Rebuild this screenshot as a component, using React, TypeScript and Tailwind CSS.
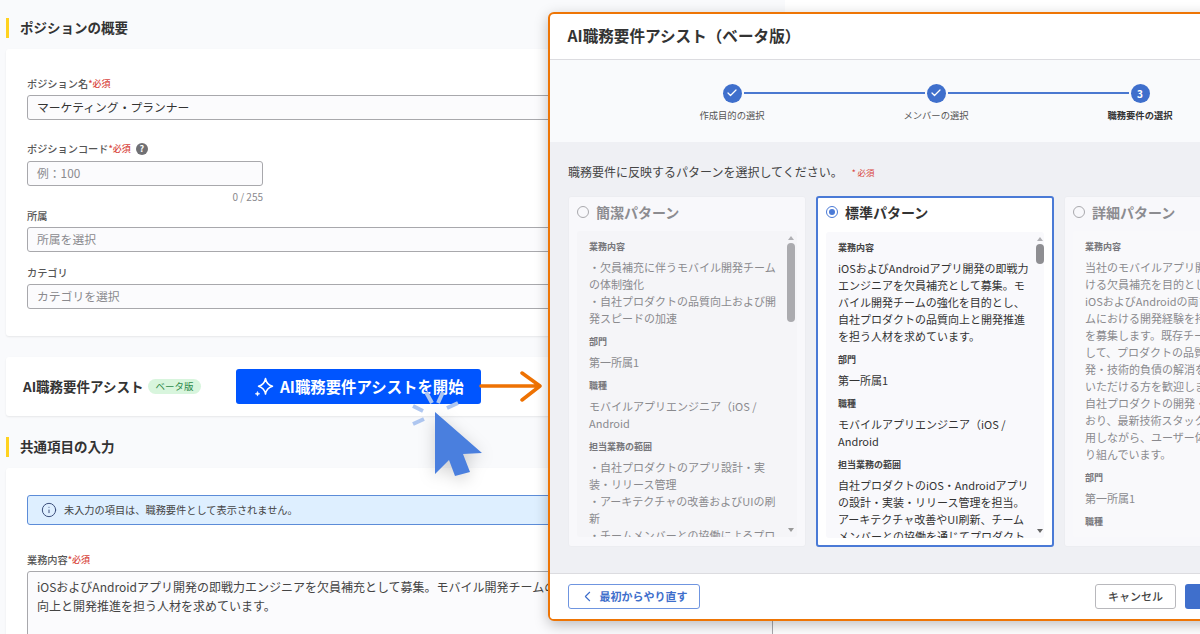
import React, { FC } from 'react';
import { Check, ChevronLeft, Info } from 'lucide-react';

const Heading: FC<{ title: string }> = ({ title }) => (
    <div className="flex h-[20px] items-center">
        <div className="h-[20px] w-[3px] bg-[#ffd21f]" />
        <h2 className="ml-[11px] -translate-y-px text-[13.5px] leading-[20px] font-bold text-[#333]">{title}</h2>
    </div>
);

const Required = () => <span className="text-[9px] text-[#d8453c]">*必須</span>;

const FieldLabel: FC<{ label: string; required?: boolean; children?: React.ReactNode }> = ({ label, required, children }) => (
    <div className="flex h-[14px] items-center text-[10.2px] leading-[14px] font-medium text-[#555]">
        {label}
        {required && <Required />}
        {children}
    </div>
);

const Field: FC<{ value: string; filled?: boolean; className?: string }> = ({ value, filled, className = '' }) => (
    <div className={`flex h-[25px] items-center rounded-[3px] border border-[#a8a8ac] bg-[#fbfbfd] pb-[2px] pl-[9px] text-[11.8px] ${filled ? 'text-[#333]' : 'text-[#8a8a8e]'} ${className}`}>
        {value}
    </div>
);

const Sparkle = () => (
    <svg width="22" height="22" viewBox="0 0 22 22" fill="none">
        <path d="M12.5 2.5c.8 4.4 2.8 6.7 7 7.8-4.2 1.1-6.2 3.4-7 7.8-.8-4.4-2.8-6.7-7-7.8 4.2-1.1 6.2-3.4 7-7.8z" stroke="white" strokeWidth="1.5" strokeLinejoin="round" />
        <path d="M4.5 15.5c.3 1.4.9 2 2.3 2.3-1.4.3-2 .9-2.3 2.3-.3-1.4-.9-2-2.3-2.3 1.4-.3 2-.9 2.3-2.3z" fill="white" stroke="white" strokeWidth="0.6" />
    </svg>
);

type Section = { title: string; lines: string[] };

const conciseSections: Section[] = [
    { title: '業務内容', lines: ['・欠員補充に伴うモバイル開発チーム', 'の体制強化', '・自社プロダクトの品質向上および開', '発スピードの加速'] },
    { title: '部門', lines: ['第一所属1'] },
    { title: '職種', lines: ['モバイルアプリエンジニア（iOS /', 'Android'] },
    { title: '担当業務の範囲', lines: ['・自社プロダクトのアプリ設計・実', '装・リリース管理', '・アーキテクチャの改善およびUIの刷', '新', '・チームメンバーとの協働によるプロ'] },
];

const standardSections: Section[] = [
    { title: '業務内容', lines: ['iOSおよびAndroidアプリ開発の即戦力', 'エンジニアを欠員補充として募集。モ', 'バイル開発チームの強化を目的とし、', '自社プロダクトの品質向上と開発推進', 'を担う人材を求めています。'] },
    { title: '部門', lines: ['第一所属1'] },
    { title: '職種', lines: ['モバイルアプリエンジニア（iOS /', 'Android'] },
    { title: '担当業務の範囲', lines: ['自社プロダクトのiOS・Androidアプリ', 'の設計・実装・リリース管理を担当。', 'アーキテクチャ改善やUI刷新、チーム', 'メンバーとの協働を通じてプロダクト'] },
];

const detailSections: Section[] = [
    { title: '業務内容', lines: ['当社のモバイルアプリ開発チームにお', 'ける欠員補充を目的とした採用です。', 'iOSおよびAndroidの両プラットフォー', 'ムにおける開発経験を持つエンジニア', 'を募集します。既存チームの一員と', 'して、プロダクトの品質向上や新規開', '発・技術的負債の解消を担当して', 'いただける方を歓迎します。', '自社プロダクトの開発・運用を行って', 'おり、最新技術スタックを積極的に活', '用しながら、ユーザー体験の向上に取', 'り組んでいます。'] },
    { title: '部門', lines: ['第一所属1'] },
    { title: '職種', lines: ['モバイルアプリエンジニア'] },
];

const PatternCard: FC<{ title: string; sections: Section[]; selected?: boolean; thumb?: string; dim?: boolean }> = ({ title, sections, selected, thumb, dim }) => (
    <div className={`flex h-[351px] w-[238px] shrink-0 flex-col rounded-[3px] ${selected ? 'border-2 border-[#4a7ad6] bg-white' : 'border border-[#ecedf1] bg-[#f8f8fb]'}`}>
        <div className={`flex h-[34px] shrink-0 items-center pl-[8px] ${selected ? 'pb-[5px]' : 'pb-[3px]'}`}>
            {selected ? (
                <div className="flex h-[12px] w-[12px] items-center justify-center rounded-full border-[1.5px] border-[#4a7ad6]">
                    <div className="h-[6px] w-[6px] rounded-full bg-[#4a7ad6]" />
                </div>
            ) : (
                <div className="h-[12px] w-[12px] rounded-full border-[1.5px] border-[#a9a9ad]" />
            )}
            <span className={`ml-[7px] text-[14px] font-bold ${selected ? 'text-[#333]' : 'text-[#8c8c90]'}`}>{title}</span>
        </div>
        <div className={`mx-[8px] flex h-[306px] overflow-hidden rounded-[3px] ${selected ? 'mx-[7px] bg-[#f9f9fc]' : dim ? 'bg-[#f9f9fb]' : 'bg-[#f5f5f8]'}`}>
            <div className="w-[207px] shrink-0 overflow-hidden pl-[12px] pt-[9px]">
                {sections.map(section => (
                    <div key={section.title} className="mb-[8px]">
                        <div className={`mb-[5px] text-[9px] leading-[14px] font-bold ${selected ? 'text-[#444]' : 'text-[#77777b]'}`}>{section.title}</div>
                        {section.lines.map(line => (
                            <div key={line} className={`text-[11px] leading-[17px] whitespace-nowrap ${selected ? 'text-[#333]' : 'text-[#8a8a8e]'}`}>{line}</div>
                        ))}
                    </div>
                ))}
            </div>
            <div className="flex w-[13px] shrink-0 flex-col items-center pt-[5px]">
                <div className="h-0 w-0 border-x-[3px] border-b-[4px] border-x-transparent border-b-[#b0b0b4]" />
                <div className={`mt-[3px] w-[8px] rounded-full ${thumb} ${selected ? 'bg-[#8e8e92]' : 'bg-[#ababaf]'}`} />
                <div className={`mt-auto mb-[5px] h-0 w-0 border-x-[3px] border-t-[4px] border-x-transparent ${selected ? 'border-t-[#666]' : 'border-t-[#999]'}`} />
            </div>
        </div>
    </div>
);

const StepLabel: FC<{ label: string; active?: boolean }> = ({ label, active }) => (
    <div className={`w-[204px] text-center text-[9.3px] leading-[14px] ${active ? 'font-bold text-[#333]' : 'text-[#555]'}`}>{label}</div>
);

const StepDone = () => (
    <div className="flex h-[19px] w-[19px] items-center justify-center rounded-full bg-[#3f6fcc]">
        <Check size={12} color="white" strokeWidth={2.5} />
    </div>
);

const App: FC = () => {
    return (
        <div className="relative h-[634px] w-[1200px] overflow-hidden bg-white font-['Noto_Sans_CJK_JP','Noto_Sans',sans-serif]">
            {/* page behind the dialog */}
            <div className="h-[634px] w-[785px] overflow-hidden bg-[#f9fafc] pl-[6px] pt-[18px]">
                <Heading title="ポジションの概要" />
                <div className="mt-[11px] h-[287px] rounded-[3px] bg-white pl-[21px] pr-[12px] pt-[28px] shadow-[0_1px_2px_rgba(0,0,0,0.08)]">
                    <FieldLabel label="ポジション名" required />
                    <Field value="マーケティング・プランナー" filled className="mt-[4px]" />
                    <div className="mt-[22px]">
                        <FieldLabel label="ポジションコード" required>
                            <span className="ml-[5px] flex h-[12px] w-[12px] items-center justify-center rounded-full bg-[#707074] text-[9px] font-bold text-white">?</span>
                        </FieldLabel>
                    </div>
                    <Field value="例：100" className="mt-[5px] w-[236px]" />
                    <div className="mt-[4px] h-[14px] w-[236px] text-right text-[10px] leading-[14px] text-[#8a8a8e]">0 / 255</div>
                    <div className="mt-[5px]"><FieldLabel label="所属" /></div>
                    <Field value="所属を選択" className="mt-[4px]" />
                    <div className="mt-[14px]"><FieldLabel label="カテゴリ" /></div>
                    <Field value="カテゴリを選択" className="mt-[4px]" />
                </div>

                <div className="mt-[21px] flex h-[59px] items-center rounded-[3px] bg-white pl-[17px] shadow-[0_1px_2px_rgba(0,0,0,0.08)]">
                    <span className="w-[121px] text-[13.5px] font-bold whitespace-nowrap text-[#333]">AI職務要件アシスト</span>
                    <span className="ml-[4px] flex h-[15px] w-[53px] items-center justify-center rounded-full bg-[#d8f5dd] text-[9.5px] text-[#2f8a4a]">ベータ版</span>
                    <button className="ml-[35px] flex h-[35px] w-[245px] items-center rounded-[3px] bg-[#0055ff] pl-[17px] text-[15.4px] font-bold whitespace-nowrap text-white">
                        <Sparkle />
                        <span className="ml-[5px]">AI職務要件アシストを開始</span>
                    </button>
                </div>

                <div className="mt-[21px]"><Heading title="共通項目の入力" /></div>
                <div className="mt-[11px] h-[200px] rounded-[3px] bg-white pl-[21px] pr-[12px] pt-[27px] shadow-[0_1px_2px_rgba(0,0,0,0.08)]">
                    <div className="flex h-[30px] items-center rounded-[3px] border border-[#5c8cd8] bg-[#deefff] pl-[13px]">
                        <Info size={16} color="#3c4f7c" strokeWidth={1.5} />
                        <span className="ml-[7px] text-[10.2px] text-[#444]">未入力の項目は、職務要件として表示されません。</span>
                    </div>
                    <div className="mt-[28px]"><FieldLabel label="業務内容" required /></div>
                    <div className="mt-[4px] h-[100px] rounded-[3px] border border-[#a8a8ac] bg-[#fbfbfd] pl-[9px] pt-[5px] text-[12px] leading-[19px] text-[#444]">
                        <div className="whitespace-nowrap">iOSおよびAndroidアプリ開発の即戦力エンジニアを欠員補充として募集。モバイル開発チームの強化を目的とし、</div>
                        <div>向上と開発推進を担う人材を求めています。</div>
                    </div>
                </div>
            </div>

            {/* arrow and cursor lying over the button */}
            <svg className="absolute left-0 top-0" width="600" height="500" fill="none">
                <path d="M481 386H539M522 373L540 386L522 400" stroke="#ee7203" strokeWidth="3.5" strokeLinecap="round" strokeLinejoin="round" />
                <g stroke="#aec6f0" strokeWidth="4">
                    <path d="M426 392L432 403" />
                    <path d="M443 392L438 403" />
                    <path d="M413 406L423 411" />
                    <path d="M458 403L447 408" />
                    <path d="M413 424L424 419" />
                </g>
                <path d="M435 412L482 453L463 454L470 472L455 476L449 460L435 474Z" fill="#4a7fde" style={{ filter: 'drop-shadow(0 4px 8px rgba(0,0,0,0.18))' }} />
            </svg>

            {/* dialog */}
            <div className="absolute left-[548px] top-[12px] flex h-[609px] w-[776px] flex-col overflow-hidden rounded-[6px] border-[2.5px] border-[#ee7505] bg-white shadow-[0_4px_14px_rgba(0,0,0,0.25)]">
                <div className="flex h-[45.5px] shrink-0 items-center border-b border-[#dcdce0] pb-[2px] pl-[17.5px]">
                    <h1 className="text-[15.6px] font-bold text-[#333]">AI職務要件アシスト（ベータ版）</h1>
                </div>
                <div className="h-[82px] shrink-0 bg-[#f9fafc] pt-[24px]">
                    <div className="flex items-center justify-center gap-[2px]">
                        <StepDone />
                        <div className="h-[2px] w-[181px] bg-[#4a78d0]" />
                        <StepDone />
                        <div className="h-[2px] w-[181px] bg-[#4a78d0]" />
                        <div className="flex h-[19px] w-[19px] items-center justify-center rounded-full bg-[#3f6fcc] text-[10px] font-bold text-white">3</div>
                    </div>
                    <div className="mt-[5px] flex justify-center">
                        <StepLabel label="作成目的の選択" />
                        <StepLabel label="メンバーの選択" />
                        <StepLabel label="職務要件の選択" active />
                    </div>
                </div>
                <div className="min-h-0 flex-1 bg-[#eff0f4] pl-[18px] pt-[22px]">
                    <div className="flex h-[16px] items-start text-[12px] leading-[16px] text-[#444]">
                        職務要件に反映するパターンを選択してください。
                        <span className="ml-[9px] text-[8.5px] text-[#d8453c]">* 必須</span>
                    </div>
                    <div className="mt-[16px] flex gap-[10px]">
                        <PatternCard title="簡潔パターン" sections={conciseSections} thumb="h-[79px]" />
                        <PatternCard title="標準パターン" sections={standardSections} selected thumb="h-[20px]" />
                        <PatternCard title="詳細パターン" sections={detailSections} dim thumb="h-[20px]" />
                    </div>
                </div>
                <div className="flex h-[46px] shrink-0 items-start justify-between border-t border-[#dcdce0] bg-white pl-[17.5px] pr-[18px] pt-[10px]">
                    <button className="flex h-[25px] w-[132px] items-center rounded-[3px] border border-[#6f95e0] pl-[10px] text-[11px] font-bold text-[#3f6fcc]">
                        <ChevronLeft size={17} strokeWidth={1.5} />
                        <span className="ml-[4px]">最初からやり直す</span>
                    </button>
                    <div className="flex gap-[9px]">
                        <button className="h-[25px] w-[81px] rounded-[3px] border border-[#b8b8bc] text-[11px] font-medium text-[#444]">キャンセル</button>
                        <button className="h-[25px] w-[119px] rounded-[3px] bg-[#3f6fcc] text-[11px] font-bold text-white">職務要件に反映</button>
                    </div>
                </div>
            </div>
        </div>
    );
};

export default App;
